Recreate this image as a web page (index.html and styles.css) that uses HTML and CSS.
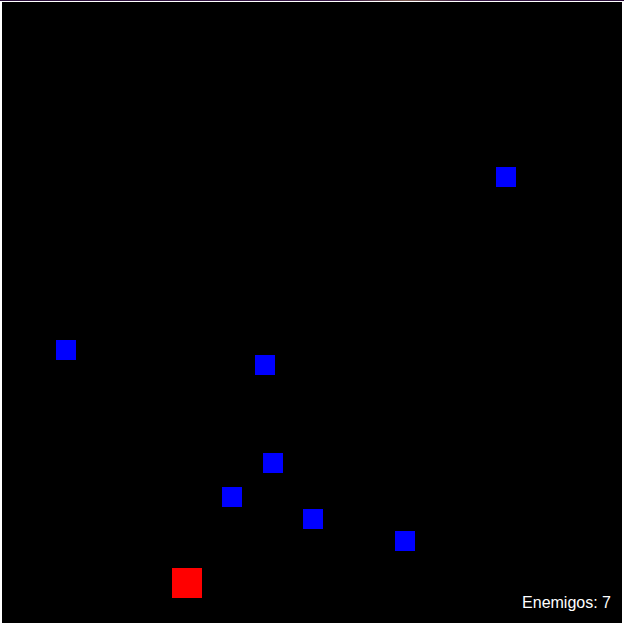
FILE: index.html
```html
<!DOCTYPE html>
<html lang="es">
<head>
<meta charset="utf-8">
<link rel="stylesheet" href="styles.css">
<title>Juego</title>
</head>
<body>
<div class="topline"></div>
<div class="game">
  <div class="player" style="left:170px;top:566px"></div>
  <div class="enemy" style="left:494px;top:165px"></div>
  <div class="enemy" style="left:54px;top:338px"></div>
  <div class="enemy" style="left:253px;top:353px"></div>
  <div class="enemy" style="left:261px;top:451px"></div>
  <div class="enemy" style="left:220px;top:485px"></div>
  <div class="enemy" style="left:301px;top:507px"></div>
  <div class="enemy" style="left:393px;top:529px"></div>
  <div class="hud">Enemigos: 7</div>
</div>
</body>
</html>
```
FILE: styles.css
```css
html, body {
  margin: 0;
  padding: 0;
  background: #ffffff;
  overflow: hidden;
  height: 623px;
}
.topline {
  height: 1px;
  background: linear-gradient(90deg, #2a0f3a 0%, #3a1a4a 55%, #7a5a50 65%, #3a1a4a 75%, #2a0f3a 100%);
}
.game {
  position: relative;
  margin: 1px 2px 0 2px;
  width: 620px;
  height: 622px;
  background: #000000;
}
.player {
  position: absolute;
  width: 30px;
  height: 30px;
  background: #ff0000;
}
.enemy {
  position: absolute;
  width: 20px;
  height: 20px;
  background: #0000ff;
}
.hud {
  position: absolute;
  right: 11px;
  top: 592px;
  color: #ffffff;
  font-family: "Liberation Sans", Arial, sans-serif;
  font-size: 16px;
  line-height: 18px;
}
```
